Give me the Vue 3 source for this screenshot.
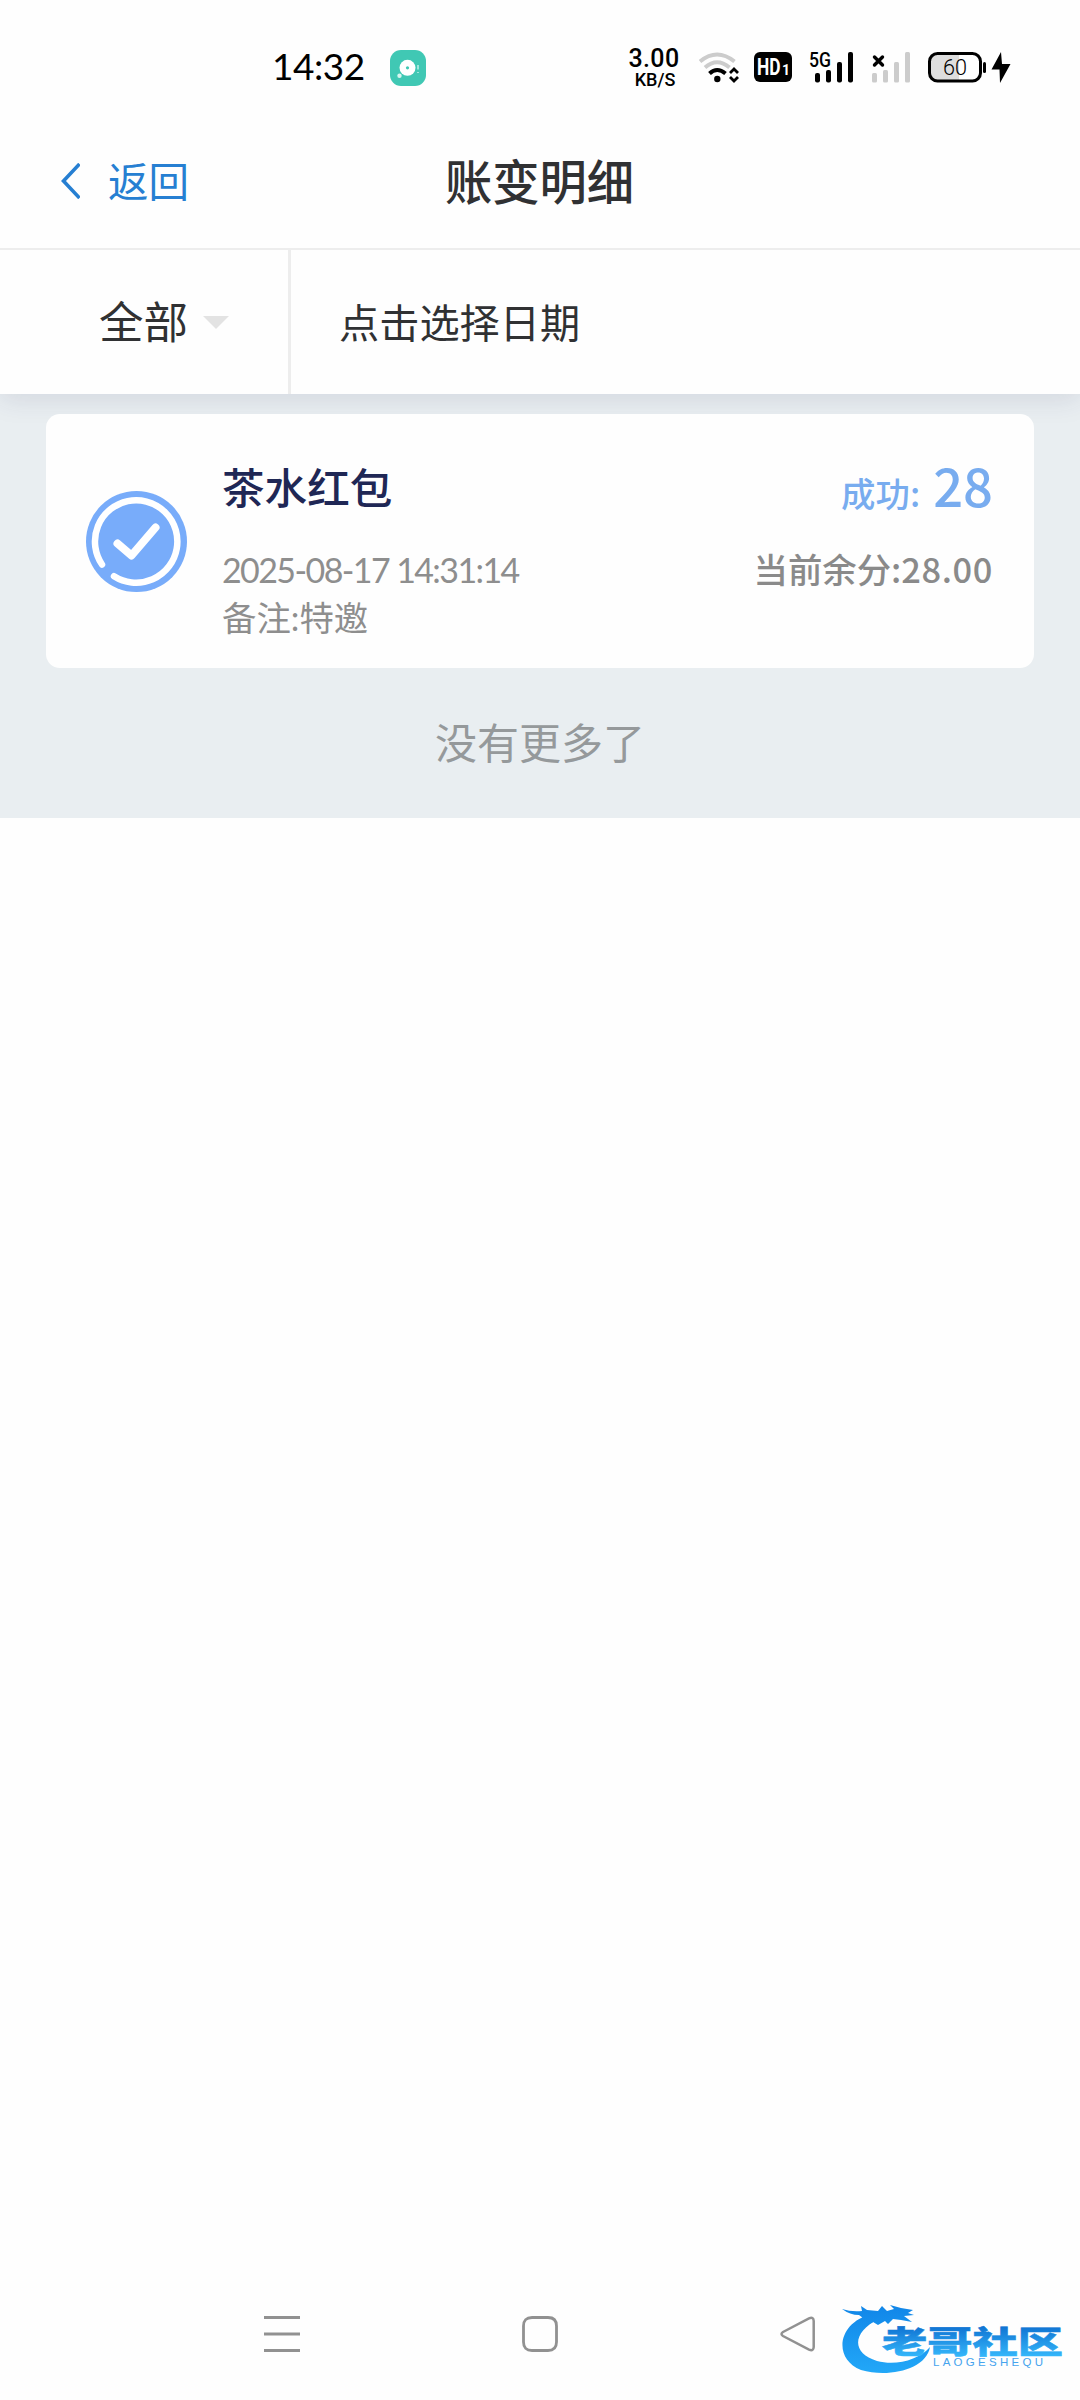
<script setup>
const record = {
  title: '茶水红包',
  time: '2025-08-17 14:31:14',
  note: '备注:特邀',
  amount: '28',
  balance: '28.00',
}
</script>

<template>
  <div class="screen">
    <div class="status">
      <span class="clock">14:32</span>
      <svg class="app-badge" width="36" height="36" viewBox="0 0 36 36">
        <rect width="36" height="36" rx="11" fill="#40c8b4" />
        <circle cx="17.5" cy="17.8" r="8" fill="#fff" />
        <circle cx="17.5" cy="17.8" r="1.6" fill="#40c8b4" />
        <circle cx="9.5" cy="25.8" r="2.2" fill="#d8f6f1" />
        <path d="M28 15v4.600M28 22v1" stroke="#b8eee6" stroke-width="1.6" />
      </svg>
      <div class="speed">
        <span class="speed-value">3.00</span>
        <span class="speed-unit">KB/S</span>
      </div>
      <svg class="wifi" width="40" height="32" viewBox="0 0 40 32">
        <g fill="none" stroke-width="4">
          <path d="M1 9.500Q18 -4.500 35.500 9.500" stroke="#ccc" />
          <path d="M6 15.500Q18 5 30.500 15.500" stroke="#ccc" />
          <path d="M10.500 21.500Q18 14.500 26.500 21.500" stroke="#000" />
        </g>
        <circle cx="18.300" cy="27" r="3.200" />
        <path d="M31 21l4-4 4 4M31 25l4 4 4-4" fill="none" stroke="#000" stroke-width="2.800" />
      </svg>
      <svg class="hd" width="38" height="30" viewBox="0 0 38 30">
        <rect width="38" height="30" rx="6" />
        <text x="3" y="23" class="hd-text" textLength="23.500" lengthAdjust="spacingAndGlyphs">HD</text>
        <text x="28" y="22.500" class="hd-num">1</text>
      </svg>
      <svg class="signal" width="44" height="32" viewBox="0 0 44 32">
        <text x="-1" y="15" class="net" textLength="22" lengthAdjust="spacingAndGlyphs">5G</text>
        <g>
          <rect x="5" y="21" width="5" height="9.500" rx="2" />
          <rect x="16" y="18" width="5" height="12.500" rx="2" />
          <rect x="27" y="10" width="5" height="20.500" rx="2" />
          <rect x="38" y="0" width="5" height="30.500" rx="2" />
        </g>
      </svg>
      <svg class="signal-off" width="39" height="32" viewBox="0 0 39 32">
        <path d="M2.500 5l8 8M10.500 5l-8 8" stroke="#000" stroke-width="3.400" stroke-linecap="round" />
        <g fill="#ccc">
          <rect x="0" y="21" width="5" height="9.500" rx="1.500" />
          <rect x="11" y="18" width="5" height="12.500" rx="1.500" />
          <rect x="22" y="10" width="5" height="20.500" rx="1.500" />
          <rect x="33" y="0" width="5" height="30.500" rx="1.500" />
        </g>
      </svg>
      <svg class="battery" width="84" height="32" viewBox="0 0 84 32">
        <rect x="1.500" y="1.500" width="51" height="27.500" rx="8" fill="#fff" />
        <path d="M9 3h22v25H9q-6 0-6-6V9q0-6 6-6z" fill="#dedede" />
        <rect x="1.500" y="1.500" width="51" height="27.500" rx="8" fill="none" stroke="#000" stroke-width="3" />
        <rect x="55" y="10" width="3" height="11" rx="1.500" />
        <path d="M73 0L63.500 17.500h8L72 31 82.500 12h-8.500z" />
        <text x="15" y="22.500" class="level" textLength="24" lengthAdjust="spacingAndGlyphs">60</text>
      </svg>
    </div>

    <header class="header">
      <a class="back">
        <svg width="20" height="36" viewBox="0 0 20 36">
          <path d="M19.500 1L3.500 18l16 17" fill="none" stroke="#267fd2" stroke-width="3.600" />
        </svg>
        <span>返回</span>
      </a>
      <h1>账变明细</h1>
    </header>

    <div class="filters">
      <div class="type"><span>全部</span><i class="caret"></i></div>
      <div class="date">点击选择日期</div>
    </div>

    <main class="list">
      <article class="card">
        <svg class="done" width="102" height="102" viewBox="0 0 102 102">
          <circle cx="50.500" cy="50.500" r="50.500" fill="#78acfa" />
          <path d="M16 73.500A41.200 41.200 0 1 1 28 85.200" fill="none" stroke="#fff" stroke-width="6.500" stroke-linecap="round" />
          <path d="M31.500 52.500L45.500 64.500 69.500 36.500" fill="none" stroke="#fff" stroke-width="8" stroke-linecap="round" stroke-linejoin="round" />
        </svg>
        <div class="info">
          <div class="name">{{ record.title }}</div>
          <div class="time">{{ record.time }}</div>
          <div class="note">{{ record.note }}</div>
        </div>
        <div class="result">
          <div class="state"><span>成功:</span><b>{{ record.amount }}</b></div>
          <div class="balance">当前余分:<span>{{ record.balance }}</span></div>
        </div>
      </article>
      <p class="end">没有更多了</p>
    </main>

    <nav class="nav">
      <svg width="36" height="36" viewBox="0 0 36 36">
        <path d="M0 1.500h36M0 18h36M0 34.500h36" stroke="#919191" stroke-width="3" />
      </svg>
      <svg width="36" height="36" viewBox="0 0 36 36">
        <path d="M10 1.500H26Q34.500 1.500 34.500 10V26Q34.500 34.500 26 34.500H10Q1.500 34.500 1.500 26V10Q1.500 1.500 10 1.500Z" fill="none" stroke="#919191" stroke-width="2.800" />
      </svg>
      <svg width="36" height="36" viewBox="0 0 36 36">
        <path d="M3 16L29 2.400Q33.600 .5 33.700 5V31Q33.600 35.500 29 33.600L3 20Q0 18 3 16Z" fill="none" stroke="#919191" stroke-width="2.500" />
      </svg>
    </nav>

    <svg class="watermark" width="240" height="80" viewBox="840 2300 240 80">
      <defs>
        <linearGradient id="ink" gradientUnits="userSpaceOnUse" x1="0" y1="2305" x2="0" y2="2373">
          <stop offset="0" stop-color="#1186e8" />
          <stop offset="1" stop-color="#22a8f8" />
        </linearGradient>
        <linearGradient id="brand-ink" gradientUnits="userSpaceOnUse" x1="0" y1="2326" x2="0" y2="2357">
          <stop offset="0" stop-color="#0f72d2" />
          <stop offset="1" stop-color="#35b8fb" />
        </linearGradient>
      </defs>
      <g fill="url(#ink)">
        <path d="M872 2314C838 2322 832 2358 861 2370C888 2378 926 2370 930 2347C919 2360 896 2366 877 2361C851 2353 852 2332 879 2319Z" />
        <path d="M842 2309Q851 2312 862 2311L861 2306 867 2310 878 2311 882 2306 887 2311 894 2309 890 2305 901 2308 913 2310 908 2313 914 2315 904 2316 912 2322 901 2320 893 2319 888 2324 885 2321 878 2325 873 2322 864 2326Q866 2319 859 2315Q850 2315 842 2309Z" />
      </g>
      <text x="882" y="2352.500" class="brand" textLength="181" lengthAdjust="spacingAndGlyphs">老哥社区</text>
      <text x="933" y="2366" class="latin" textLength="110">LAOGESHEQU</text>
    </svg>
  </div>
</template>

<style>
body {
  margin: 0;
  background: #fff;
}
</style>

<style scoped>
.screen {
  position: relative;
  display: flex;
  flex-direction: column;
  width: 1080px;
  height: 2400px;
  overflow: hidden;
  background: #fefefe;
  color: #303133;
  font-family: Lato, "Noto Sans CJK SC", sans-serif;
}
.status {
  display: flex;
  align-items: flex-start;
  box-sizing: border-box;
  height: 114px;
  padding: 50px 0 0 272px;
  color: #000;
}
.clock {
  width: 118px;
  margin-top: -2px;
  font-size: 37px;
  line-height: 36px;
  letter-spacing: -0.5px;
}
.app-badge { margin-right: 200px; }
.speed {
  display: flex;
  flex-direction: column;
  align-items: center;
  width: 56px;
  margin-right: 17px;
}
.speed-value {
  font: 500 25px/18px Roboto, sans-serif;
  letter-spacing: 0.4px;
}
.speed-unit {
  margin: 4px 0 0 2px;
  font: 500 18px/15px Roboto, sans-serif;
}
.wifi { margin: 2px 15px 0 0; }
.hd { margin: 2px 18px 0 0; }
.hd-text {
  fill: #fff;
  font: 700 23px Roboto, sans-serif;
}
.hd-num {
  fill: #fff;
  font: 700 14px Roboto, sans-serif;
}
.signal {
  margin: 2px 18px 0 0;
  overflow: visible;
}
.signal-off { margin: 2px 17px 0 0; }
.battery { margin-top: 2px; }
.net { font: 500 20px Roboto, sans-serif; }
.level { font: 300 22.500px Roboto, sans-serif; }

.header {
  position: relative;
  display: flex;
  align-items: center;
  justify-content: center;
  box-sizing: border-box;
  height: 136px;
  border-bottom: 2px solid #ededed;
}
.back {
  position: absolute;
  left: 60px;
  top: 47px;
  display: flex;
  align-items: center;
  gap: 28px;
  height: 40px;
  color: #267fd2;
  font-size: 40.500px;
}
.back span {
  margin-top: -3px;
}
h1 {
  margin: 1px 1px 0 0;
  font-size: 47.300px;
  font-weight: 500;
  line-height: 60px;
}
.filters {
  position: relative;
  z-index: 1;
  display: flex;
  height: 144px;
  background: #fefefe;
  box-shadow: 0 4px 26px rgba(50, 50, 93, 0.13);
  clip-path: inset(0 0 -40px 0);
}
.type {
  display: flex;
  align-items: center;
  box-sizing: border-box;
  width: 291px;
  padding: 0 0 5px 99px;
  border-right: 3px solid #ededed;
  font-size: 44.500px;
}
.caret {
  margin: 5px 0 0 15px;
  border: solid transparent;
  border-width: 13px 13px 0;
  border-top-color: #e3e3e3;
}
.date {
  display: flex;
  align-items: center;
  padding: 0 0 3px 48px;
  font-size: 40.200px;
}
.list {
  box-sizing: border-box;
  height: 424px;
  padding: 20px 46px 0;
  background: #e9eef1;
}
.card {
  position: relative;
  z-index: 2;
  display: flex;
  box-sizing: border-box;
  height: 254px;
  padding: 0 41px 0 40px;
  border-radius: 14px;
  background: #fefefe;
}
.done {
  margin: 77px 34px 0 0;
}
.info {
  flex: 1;
  padding-top: 44px;
  color: #8e8e8e;
}
.name {
  height: 60px;
  color: #1f2755;
  font-size: 42.600px;
  font-weight: 500;
  line-height: 60px;
}
.time {
  margin-top: 27px;
  font-size: 34px;
  line-height: 50px;
  letter-spacing: -1.6px;
}
.note {
  margin-top: -1px;
  font-size: 34.400px;
  line-height: 48px;
}
.result {
  display: flex;
  flex-direction: column;
  align-items: flex-end;
  padding-top: 40px;
  font-family: "Noto Sans CJK SC", sans-serif;
  font-weight: 500;
}
.state {
  display: flex;
  align-items: baseline;
  height: 60px;
  color: #78acef;
  font-size: 34.400px;
  line-height: 60px;
}
.state b {
  margin-left: 13px;
  font-size: 52.500px;
  font-weight: 500;
}
.balance {
  margin-top: 29px;
  color: #8a8a8a;
  font-size: 34.400px;
  line-height: 50px;
}
.balance span {
  letter-spacing: 0.6px;
}
.end {
  margin: 45px 0 0;
  color: #95999b;
  font-size: 42px;
  line-height: 60px;
  text-align: center;
}
.nav {
  display: flex;
  gap: 222px;
  margin-top: auto;
  padding: 0 0 48px 264px;
}
.watermark {
  position: absolute;
  right: 0;
  bottom: 20px;
}
.brand {
  fill: url(#brand-ink);
  stroke: url(#brand-ink);
  stroke-width: 0.5px;
  font: 900 31px "Noto Sans CJK SC", sans-serif;
}
.latin {
  fill: #46a4ee;
  font: 400 11.500px "Liberation Sans", sans-serif;
}
</style>
